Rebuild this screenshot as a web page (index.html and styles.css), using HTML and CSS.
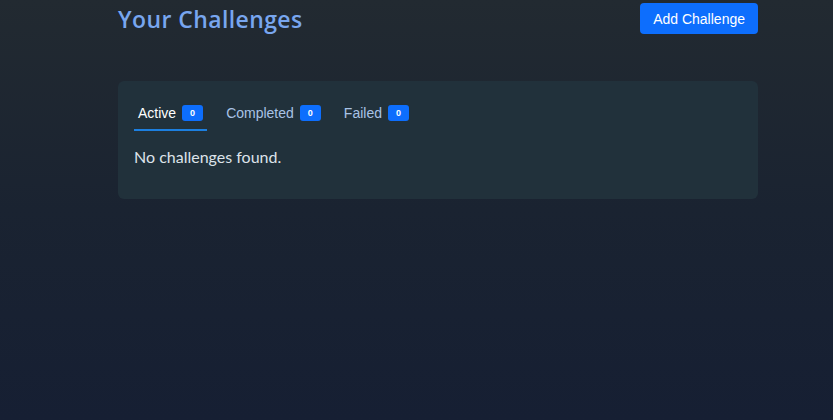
FILE: index.html
```html
<!DOCTYPE html>
<html lang="en">
<head>
<meta charset="utf-8">
<title>Your Challenges</title>
<link rel="stylesheet" href="styles.css">
</head>
<body>
<main class="container">
  <header class="page-header">
    <h1 class="page-title">Your Challenges</h1>
    <button class="btn-primary" type="button">Add Challenge</button>
  </header>
  <section class="card">
    <nav class="tabs">
      <a class="tab active" href="#">Active <span class="badge">0</span></a>
      <a class="tab" href="#">Completed <span class="badge">0</span></a>
      <a class="tab" href="#">Failed <span class="badge">0</span></a>
    </nav>
    <p class="empty">No challenges found.</p>
  </section>
</main>
</body>
</html>
```
FILE: styles.css
```css
html, body {
  margin: 0;
  height: 100%;
}
body {
  background: linear-gradient(180deg, #222a31 0%, #1a2331 50%, #161f33 100%);
  font-family: "Liberation Sans", Arial, sans-serif;
  color: #dde3ea;
}
.container {
  width: 640px;
  margin: 0 0 0 118px;
  padding-top: 3px;
}
.page-header {
  display: flex;
  justify-content: space-between;
  align-items: center;
  height: 31px;
}
.page-title {
  margin: 0;
  font-family: "Open Sans", sans-serif;
  font-weight: 600;
  font-size: 23px;
  letter-spacing: 0.4px;
  color: #78a6ef;
  line-height: 30px;
}
.btn-primary {
  height: 31px;
  padding: 0 13px;
  border: none;
  border-radius: 4px;
  background: #0d6efd;
  color: #fff;
  font-family: "Liberation Sans", Arial, sans-serif;
  font-size: 14px;
}
.card {
  margin-top: 47px;
  background: #21313b;
  border-radius: 6px;
  padding: 16px 16px 1px;
}
.tabs {
  display: flex;
  gap: 15px;
}
.tab {
  display: flex;
  align-items: center;
  gap: 6px;
  padding: 8px 4px;
  height: 16px;
  border-bottom: 2px solid transparent;
  color: #a9c3e6;
  font-size: 14px;
  text-decoration: none;
}
.tab.active {
  color: #ffffff;
  border-bottom-color: #1c7fe0;
}
.badge {
  display: inline-flex;
  align-items: center;
  justify-content: center;
  width: 21px;
  height: 16px;
  border-radius: 3px;
  background: #0d6efd;
  color: #fff;
  font-size: 9px;
  font-weight: 700;
}
.empty {
  margin: 14px 0 29px;
  font-family: Lato, sans-serif;
  font-size: 16px;
  line-height: 24px;
  color: #dde3ea;
}
```
